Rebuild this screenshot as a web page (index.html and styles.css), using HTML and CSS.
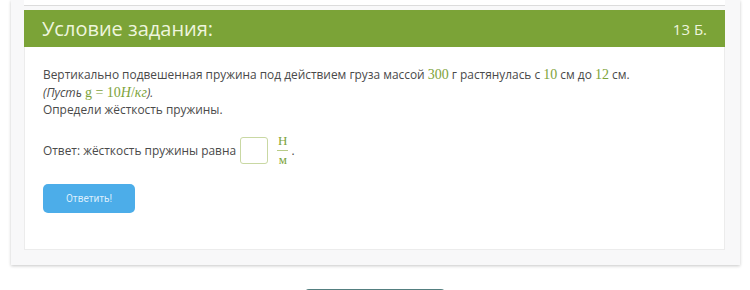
FILE: index.html
```html
<!DOCTYPE html>
<html lang="ru">
<head>
    <meta charset="UTF-8">
    <title>Условие задания</title>
    <link rel="stylesheet" href="styles.css">
</head>
<body>
    <div class="panel">
        <div class="prev"></div>
        <div class="task-head">
            <span class="task-title">Условие задания:</span>
            <span class="task-points">13 Б.</span>
        </div>
        <div class="task-body">
            <p class="task-text">
                Вертикально подвешенная пружина под действием груза массой <span class="num">300</span> г растянулась с <span class="num">10</span> см до <span class="num">12</span> см.<br>
                <i>(Пусть <span class="num">g = 10<i>Н</i>/<i>кг</i></span>).</i><br>
                Определи жёсткость пружины.
            </p>
            <div class="answer">
                Ответ: жёсткость пружины равна
                <span class="answer-box"></span>
                <span class="frac"><span class="frac-top">Н</span><span class="frac-bottom">м</span></span>.
            </div>
            <div class="submit">Ответить!</div>
        </div>
    </div>
    <div class="next-wrap">
        <div class="next-btn"></div>
    </div>
</body>
</html>
```

FILE: styles.css
```css
body {
    margin: 0;
    background: #fff;
    font-family: 'Open Sans', sans-serif;
    color: #4a4a4a;
}
.panel {
    margin: 0 10px 0 11px;
    background: #f8f8f9;
    box-shadow: 0 1px 3px rgba(0, 0, 0, 0.22);
    padding: 0 15px 15px 13px;
}
.prev {
    height: 5px;
    background: #fff;
    border-bottom: 1px solid #dcdcdc;
}
.task-head {
    margin-top: 4px;
    height: 37px;
    background: #7ba337;
    display: flex;
    justify-content: space-between;
    align-items: center;
    padding: 0 18px;
    color: #eef5dd;
}
.task-title {
    font-size: 20px;
}
.task-points {
    font-size: 15px;
}
.task-body {
    background: #fff;
    border: 1px solid #ececec;
    border-top: none;
    padding: 19px 18px 36px;
}
.task-text {
    margin: 0;
    font-size: 11.9px;
    line-height: 16.5px;
}
.num {
    font-family: 'Liberation Serif', serif;
    font-size: 14px;
    color: #7da33a;
    font-style: normal;
}
.answer {
    margin-top: 16px;
    font-size: 11.9px;
    display: flex;
    align-items: center;
    gap: 3px;
}
.answer-box {
    width: 26px;
    height: 25px;
    border: 1px solid #c9d8a3;
    border-radius: 3px;
    margin: 0 6px 0 1px;
}
.frac {
    display: inline-flex;
    flex-direction: column;
    align-items: center;
    font-family: 'Liberation Serif', serif;
    color: #7da33a;
    font-size: 13px;
    line-height: 14px;
}
.frac-top {
    border-bottom: 1px solid #b8cc88;
    padding: 0 1px 2px;
}
.frac-bottom {
    padding-top: 2px;
}
.submit {
    margin-top: 17px;
    width: 92px;
    height: 29px;
    border-radius: 5px;
    background: #4cade9;
    color: #dbeefc;
    font-family: Roboto, sans-serif;
    font-size: 10px;
    display: flex;
    justify-content: center;
    align-items: center;
}
.next-wrap {
    display: flex;
    justify-content: center;
    padding-top: 24px;
    padding-right: 1px;
}
.next-btn {
    width: 140px;
    height: 20px;
    border-radius: 4px;
    background: #547f80;
}
```
